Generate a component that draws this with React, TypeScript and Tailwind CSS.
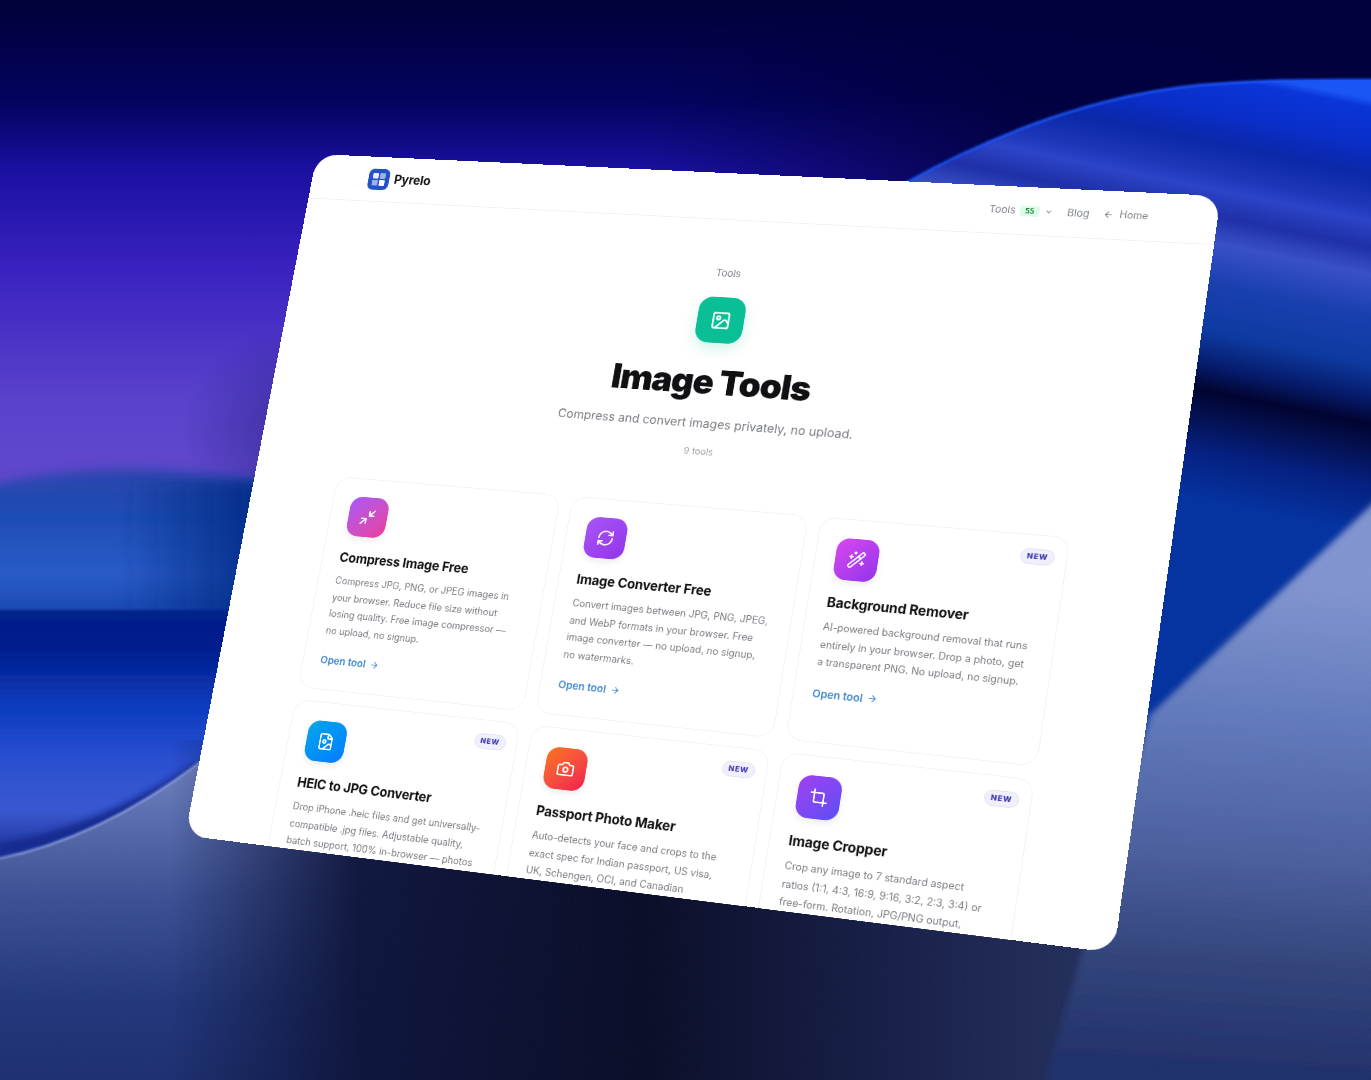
import React from "react";
import { ArrowLeft, ArrowRight, Camera, ChevronDown, Crop, FileImage, Image as ImageIcon, Minimize2, RefreshCw, WandSparkles } from "lucide-react";

type P = [number, number];

function quadMatrix(w: number, h: number, q: [P, P, P, P]) {
  const [[x0, y0], [x1, y1], [x2, y2], [x3, y3]] = q;
  const dx1 = x1 - x2, dx2 = x3 - x2, sx = x0 - x1 + x2 - x3;
  const dy1 = y1 - y2, dy2 = y3 - y2, sy = y0 - y1 + y2 - y3;
  const det = dx1 * dy2 - dy1 * dx2;
  const g = (sx * dy2 - sy * dx2) / det;
  const k = (dx1 * sy - dy1 * sx) / det;
  const a = x1 - x0 + g * x1, b = x3 - x0 + k * x3;
  const d = y1 - y0 + g * y1, e = y3 - y0 + k * y3;
  return `matrix3d(${[a / w, d / w, 0, g / w, b / h, e / h, 0, k / h, 0, 0, 1, 0, x0, y0, 0, 1].join(",")})`;
}

const windowMatrix = quadMatrix(1200, 950, [[317, 154], [1221, 196], [1114, 953], [185, 835.5]]);

const tools = [
  { title: "Compress Image Free", desc: "Compress JPG, PNG, or JPEG images in your browser. Reduce file size without losing quality. Free image compressor — no upload, no signup.", Icon: Minimize2, bg: "bg-gradient-to-br from-[#a855f7] to-[#ec3a9b]", isNew: false },
  { title: "Image Converter Free", desc: "Convert images between JPG, PNG, JPEG, and WebP formats in your browser. Free image converter — no upload, no signup, no watermarks.", Icon: RefreshCw, bg: "bg-gradient-to-br from-[#a855f7] to-[#9333ea]", isNew: false },
  { title: "Background Remover", desc: "AI-powered background removal that runs entirely in your browser. Drop a photo, get a transparent PNG. No upload, no signup.", Icon: WandSparkles, bg: "bg-gradient-to-br from-[#d946ef] to-[#9333ea]", isNew: true },
  { title: "HEIC to JPG Converter", desc: "Drop iPhone .heic files and get universally-compatible .jpg files. Adjustable quality, batch support, 100% in-browser — photos", Icon: FileImage, bg: "bg-gradient-to-br from-[#0ea5e9] to-[#0a7cff]", isNew: true },
  { title: "Passport Photo Maker", desc: "Auto-detects your face and crops to the exact spec for Indian passport, US visa, UK, Schengen, OCI, and Canadian", Icon: Camera, bg: "bg-gradient-to-br from-[#f97316] to-[#f0124f]", isNew: true },
  { title: "Image Cropper", desc: "Crop any image to 7 standard aspect\nratios (1:1, 4:3, 16:9, 9:16, 3:2, 2:3, 3:4) or free-form. Rotation, JPG/PNG output,", Icon: Crop, bg: "bg-gradient-to-br from-[#a03ff0] to-[#5b4cf5]", isNew: true },
];

function Wallpaper() {
  return (
    <svg className="absolute inset-0 h-full w-full" viewBox="0 0 1371 1080" preserveAspectRatio="none">
      <defs>
        <linearGradient id="leftBase" gradientUnits="userSpaceOnUse" x1="0" y1="0" x2="0" y2="1080">
          <stop offset="0" stopColor="#01013a" />
          <stop offset="0.093" stopColor="#03035f" />
          <stop offset="0.157" stopColor="#1a10a0" />
          <stop offset="0.25" stopColor="#3a22c0" />
          <stop offset="0.37" stopColor="#5a42cc" />
          <stop offset="0.45" stopColor="#6248cc" />
          <stop offset="1" stopColor="#6248cc" />
        </linearGradient>
        <linearGradient id="topRightShade" x1="0" y1="0" x2="1" y2="0">
          <stop offset="0" stopColor="#01013e" stopOpacity="0" />
          <stop offset="0.5" stopColor="#01013e" stopOpacity="0.85" />
          <stop offset="1" stopColor="#01013e" stopOpacity="1" />
        </linearGradient>
        <linearGradient id="hump" gradientUnits="userSpaceOnUse" x1="0" y1="465" x2="0" y2="612">
          <stop offset="0" stopColor="#2c44ac" />
          <stop offset="0.35" stopColor="#1e4db4" />
          <stop offset="0.75" stopColor="#2a5cc8" />
          <stop offset="1" stopColor="#1a48b0" />
        </linearGradient>
        <linearGradient id="humpShade" gradientUnits="userSpaceOnUse" x1="120" y1="0" x2="270" y2="0">
          <stop offset="0" stopColor="#062a84" stopOpacity="0" />
          <stop offset="1" stopColor="#062a84" stopOpacity="0.95" />
        </linearGradient>
        <radialGradient id="purpleShade">
          <stop offset="0" stopColor="#2a2488" stopOpacity="0.75" />
          <stop offset="1" stopColor="#2a2488" stopOpacity="0" />
        </radialGradient>
        <linearGradient id="bands" gradientUnits="userSpaceOnUse" x1="0" y1="610" x2="0" y2="860">
          <stop offset="0" stopColor="#05208a" />
          <stop offset="0.16" stopColor="#041f8e" />
          <stop offset="0.38" stopColor="#0a3cbc" />
          <stop offset="0.48" stopColor="#1a44c8" />
          <stop offset="0.6" stopColor="#2a50d0" />
          <stop offset="0.8" stopColor="#3a58d0" />
          <stop offset="1" stopColor="#1c2e90" />
        </linearGradient>
        <linearGradient id="rightSky" gradientUnits="userSpaceOnUse" x1="1300" y1="80" x2="1170" y2="720">
          <stop offset="0.007" stopColor="#1a55f5" />
          <stop offset="0.02" stopColor="#0a35d8" />
          <stop offset="0.075" stopColor="#0a2ec8" />
          <stop offset="0.12" stopColor="#0a28a8" />
          <stop offset="0.165" stopColor="#1c36b8" />
          <stop offset="0.19" stopColor="#2c44c8" />
          <stop offset="0.23" stopColor="#1f30a8" />
          <stop offset="0.27" stopColor="#3a50c8" />
          <stop offset="0.33" stopColor="#1a40b0" />
          <stop offset="0.405" stopColor="#0d3aa0" />
          <stop offset="0.458" stopColor="#061a6a" />
          <stop offset="0.495" stopColor="#010430" />
          <stop offset="0.533" stopColor="#041050" />
          <stop offset="0.586" stopColor="#052080" />
          <stop offset="0.66" stopColor="#0533a0" />
          <stop offset="1" stopColor="#0533a0" />
        </linearGradient>
        <linearGradient id="surface" gradientUnits="userSpaceOnUse" x1="0" y1="770" x2="0" y2="1080">
          <stop offset="0" stopColor="#6a7cbc" />
          <stop offset="0.4" stopColor="#3a4f92" />
          <stop offset="0.75" stopColor="#1f3478" />
          <stop offset="1" stopColor="#1a2c6e" />
        </linearGradient>
        <linearGradient id="surfaceShade" gradientUnits="userSpaceOnUse" x1="170" y1="0" x2="1120" y2="0">
          <stop offset="0" stopColor="#0a1036" stopOpacity="0" />
          <stop offset="0.2" stopColor="#0a1036" stopOpacity="0.95" />
          <stop offset="0.5" stopColor="#060a24" stopOpacity="1" />
          <stop offset="0.78" stopColor="#161e48" stopOpacity="1" />
          <stop offset="1" stopColor="#232f5c" stopOpacity="1" />
        </linearGradient>
        <linearGradient id="wedge" gradientUnits="userSpaceOnUse" x1="1320" y1="585" x2="1290" y2="1075">
          <stop offset="0" stopColor="#8093cf" />
          <stop offset="0.28" stopColor="#5f78ba" />
          <stop offset="0.55" stopColor="#4a5e9e" />
          <stop offset="0.78" stopColor="#2f4178" />
          <stop offset="1" stopColor="#1e2d68" />
        </linearGradient>
        <filter id="b1" x="-20%" y="-20%" width="140%" height="140%"><feGaussianBlur stdDeviation="0.8" /></filter>
        <filter id="b3" x="-20%" y="-20%" width="140%" height="140%"><feGaussianBlur stdDeviation="3" /></filter>
        <filter id="b6" x="-20%" y="-20%" width="140%" height="140%"><feGaussianBlur stdDeviation="6" /></filter>
        <filter id="grain" x="0" y="0" width="100%" height="100%">
          <feTurbulence type="fractalNoise" baseFrequency="0.75" numOctaves="2" seed="4" />
          <feColorMatrix values="0 0 0 0 0.62  0 0 0 0 0.68  0 0 0 0 0.9  0 0 0 0.05 0" />
        </filter>
        <clipPath id="grainClip">
          <path d="M-10 860 C60 848 130 815 200 762 L1150 715 L1400 478 L1400 1100 L-10 1100Z" />
        </clipPath>
      </defs>
      <rect width="1371" height="1080" fill="url(#leftBase)" />
      <rect x="640" width="731" height="260" fill="url(#topRightShade)" />
      <ellipse cx="320" cy="430" rx="140" ry="110" fill="url(#purpleShade)" />
      <path d="M-20 488 C80 462 180 462 340 494 L340 620 L-20 620Z" fill="url(#hump)" filter="url(#b6)" />
      <rect x="100" y="480" width="240" height="150" fill="url(#humpShade)" filter="url(#b6)" />
      <rect x="-20" y="610" width="500" height="260" fill="url(#bands)" filter="url(#b1)" />
      <path d="M900 186 C1000 130 1100 95 1200 85 C1270 79 1320 80 1380 80 L1380 760 L900 760Z" fill="url(#rightSky)" />
      <path d="M900 186 C1000 130 1100 95 1200 85 C1270 79 1320 80 1380 80" fill="none" stroke="#1a55f5" strokeWidth="2.5" filter="url(#b1)" />
      <path d="M-10 852 C60 842 130 815 200 768" fill="none" stroke="#152a90" strokeWidth="14" filter="url(#b3)" />
      <path d="M-10 860 C60 848 130 815 200 762 L400 740 L1000 760 L1400 760 L1400 1100 L-10 1100Z" fill="url(#surface)" />
      <path d="M-10 860 C60 848 130 815 200 762" fill="none" stroke="#93a9ea" strokeWidth="1.6" filter="url(#b1)" />
      <rect x="170" y="740" width="1000" height="350" fill="url(#surfaceShade)" />
      <path d="M1400 478 L1150 715 L1040 1100 L1400 1100Z" fill="url(#wedge)" filter="url(#b3)" />
      <g clipPath="url(#grainClip)">
        <rect x="0" y="460" width="1371" height="620" filter="url(#grain)" />
      </g>
    </svg>
  );
}

function Card({ title, desc, Icon, bg, isNew }: (typeof tools)[number]) {
  return (
    <div className="relative rounded-[20px] border border-[#f0f1f3] bg-white px-[25px] pb-[30px] pt-6">
      {isNew && (
        <span className="absolute right-[14px] top-[17px] rounded-full border border-[#e0e1f5] bg-[#eff0fb] px-[7px] py-[3px] text-[9.5px] font-extrabold leading-[12px] tracking-[0.08em] text-[#3f35b0]">NEW</span>
      )}
      <div className={`flex h-[54px] w-[54px] items-center justify-center rounded-2xl shadow-[0_4px_10px_rgba(0,0,0,0.08)] ${bg}`}>
        <Icon size={24} strokeWidth={2} color="#fff" />
      </div>
      <h3 className="-ml-[1px] mt-[17px] text-[17.2px] font-bold leading-[26px] tracking-[-0.01em] text-[#111114]">{title}</h3>
      <p className="-ml-[1px] mt-[8px] whitespace-pre-line text-[12.7px] leading-[22.5px] text-[#7b7c82]">{desc}</p>
      <div className="-ml-[1px] mt-[19px] flex items-center gap-[5px] text-[13.5px] font-semibold leading-[18px] text-[#4088d0]">
        Open tool
        <ArrowRight size={13} strokeWidth={2} />
      </div>
    </div>
  );
}

export default function App() {
  return (
    <div className="relative h-[1080px] w-full overflow-hidden bg-[#02013f] [font-family:Inter,'Liberation_Sans',sans-serif]">
      <Wallpaper />
      <div className="absolute left-0 top-0 h-[950px] w-[1200px] origin-top-left overflow-hidden rounded-[30px] bg-white" style={{ transform: windowMatrix }}>
        <div className="blur-[0.3px]">
          <header className="flex h-[64px] items-center justify-between border-b border-[#eeeff2] pl-[81px] pr-[84px]">
            <div className="flex items-center gap-[7px]">
              <span className="grid h-[30px] w-[30px] grid-cols-2 gap-[2px] rounded-lg bg-[#2352c4] p-[6px]">
                <i className="rounded-[1px] bg-white/90" />
                <i className="rounded-[1px] bg-white/55" />
                <i className="rounded-[1px] bg-white/55" />
                <i className="rounded-[1px] bg-white" />
              </span>
              <span className="text-[17px] font-bold tracking-[-0.01em] text-[#111114]">Pyrelo</span>
            </div>
            <nav className="flex items-center text-[13px] text-[#7d8089]">
              <span>Tools</span>
              <span className="ml-[6px] rounded-[3px] bg-[#dcfce7] px-[6px] text-[9px] font-bold leading-[14px] text-[#15803d]">55</span>
              <ChevronDown size={11} className="ml-[6px]" />
              <span className="ml-[18px]">Blog</span>
              <ArrowLeft size={13} className="ml-[17px]" />
              <span className="ml-[7px] text-[12.5px]">Home</span>
            </nav>
          </header>
          <main className="flex flex-col items-center pr-[4px]">
            <p className="mt-[64px] text-[13px] leading-[16px] text-[#7d8089]">Tools</p>
            <div className="mt-[25px] flex h-[62px] w-[62px] items-center justify-center rounded-[18px] bg-[#0abf95] shadow-[0_8px_18px_rgba(16,191,147,0.18)]">
              <ImageIcon size={27} strokeWidth={2} color="#fff" />
            </div>
            <h1 className="mt-[23px] text-[46px] font-black leading-[58px] tracking-[-0.03em] text-[#111114]">Image Tools</h1>
            <p className="mt-[15px] text-[16px] leading-[24px] text-[#7a7d85]">Compress and convert images privately, no upload.</p>
            <p className="mt-[18px] text-[12px] leading-[16px] text-[#a0a3aa]">9 tools</p>
            <div className="mr-[1px] mt-[64px] grid w-[962px] grid-cols-3 gap-4">
              {tools.map((t) => (
                <Card key={t.title} {...t} />
              ))}
            </div>
          </main>
        </div>
      </div>
    </div>
  );
}
